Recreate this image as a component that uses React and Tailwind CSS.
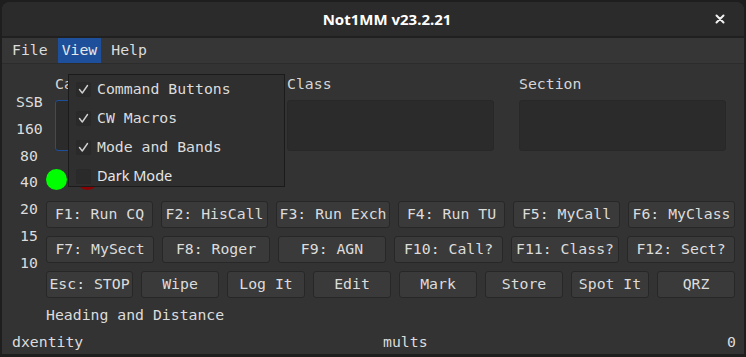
import React from 'react';

const mono = "font-['DejaVu_Sans_Mono',monospace] text-[14.8px]";

const row1 = [
  ['F1: Run CQ', 'w-[107px]'],
  ['F2: HisCall', 'w-[107px]'],
  ['F3: Run Exch', 'w-[114px]'],
  ['F4: Run TU', 'w-[107px]'],
  ['F5: MyCall', 'w-[107px]'],
  ['F6: MyClass', 'w-[107px]'],
];

const row2 = [
  ['F7: MySect', 'w-[108px]'],
  ['F8: Roger', 'w-[108px]'],
  ['F9: AGN', 'w-[108px]'],
  ['F10: Call?', 'w-[109px]'],
  ['F11: Class?', 'w-[108px]'],
  ['F12: Sect?', 'w-[108px]'],
];

const row3 = [
  ['Esc: STOP', 'w-[87px]'],
  ['Wipe', 'w-[78px]'],
  ['Log It', 'w-[78px]'],
  ['Edit', 'w-[78px]'],
  ['Mark', 'w-[78px]'],
  ['Store', 'w-[78px]'],
  ['Spot It', 'w-[78px]'],
  ['QRZ', 'w-[78px]'],
];

const bands = ['SSB', '160', '80', '40', '20', '15', '10'];

const ButtonRow = ({ items }) => (
  <div className="flex gap-2">
    {items.map(([label, w]) => (
      <div
        key={label}
        className={`${w} h-[27px] flex items-center justify-center rounded-[3px] border border-[#272727] bg-[#3a3a3a] text-[#dcdcdc] whitespace-nowrap`}
      >
        {label}
      </div>
    ))}
  </div>
);

const Field = ({ label, focused }) => (
  <div className="w-[207px] flex flex-col">
    <span className="h-[18px] leading-[18px] text-[#d6d6d6]">{label}</span>
    <div
      className={`mt-[7px] h-[51px] rounded-[3px] border bg-[#2b2b2b] ${
        focused ? 'border-[#1d4f9a]' : 'border-[#282828]'
      }`}
    />
  </div>
);

const Check = () => (
  <svg width="11" height="11" viewBox="0 0 11 11" fill="none">
    <path d="M1.5 5.5 L4.3 9 L9.5 1.5" stroke="#d0d0d0" strokeWidth="1.4" strokeLinecap="round" strokeLinejoin="round" />
  </svg>
);

const menuItems = [
  { label: 'Command Buttons', checked: true },
  { label: 'CW Macros', checked: true },
  { label: 'Mode and Bands', checked: true },
  { label: 'Dark Mode', checked: false, sans: true },
];

export default function App() {
  return (
    <div className={`relative w-[746px] h-[357px] bg-[#1e1e1e] p-[2px] pb-[3px] ${mono}`}>
      <div className="h-full flex flex-col rounded-t-[8px] overflow-hidden bg-[#333333]">
        {/* title bar */}
        <div className="h-[36px] shrink-0 flex items-center bg-[#2b2b2b] border-b-2 border-[#202020]">
          <div className="flex-1 text-center pl-[68px] pt-[1px] font-['Noto_Sans',sans-serif] font-bold text-[15px] text-white">
            Not1MM v23.2.21
          </div>
          <div className="w-[40px] flex items-center justify-center pr-[8px]">
            <svg width="10" height="10" viewBox="0 0 10 10">
              <path d="M1.5 1.5 L8.5 8.5 M8.5 1.5 L1.5 8.5" stroke="#f2f2f2" strokeWidth="2" strokeLinecap="round" />
            </svg>
          </div>
        </div>

        {/* menu bar */}
        <div className="h-[26px] shrink-0 flex items-stretch gap-[6px] pl-[6px] bg-[#363636] border-b border-[#2c2c2c] text-[#dcdcdc]">
          <span className="px-1 flex items-center">File</span>
          <span className="px-1 flex items-center bg-[#1d4f9a] text-[#e8e8e8]">View</span>
          <span className="px-1 flex items-center">Help</span>
        </div>

        {/* content */}
        <div className="flex-1 flex flex-col">
          <div className="flex">
            <div className="pl-[10px] pt-[25px] w-[44px] flex flex-col items-center text-[#dcdcdc] leading-[26.8px]">
              {bands.map((b) => (
                <span key={b} className="w-[26px] text-center">{b}</span>
              ))}
            </div>
            <div className="flex flex-col pt-[11px]">
              <div className="flex gap-[25px] pl-[9px]">
                <Field label="Callsign" focused />
                <Field label="Class" />
                <Field label="Section" />
              </div>
              <div className="mt-[18px] flex gap-[10px]">
                <div className="w-[21px] h-[21px] rounded-full bg-[#00ff00]" />
                <div className="w-[21px] h-[21px] rounded-full bg-[#8b0000]" />
              </div>
              <div className="mt-[11px] flex flex-col gap-2">
                <ButtonRow items={row1} />
                <ButtonRow items={row2} />
                <ButtonRow items={row3} />
              </div>
              <div className="mt-[8px] h-[18px] leading-[18px] text-[#dcdcdc]">Heading and Distance</div>
            </div>
          </div>
          <div className="mt-[9px] h-[18px] leading-[18px] flex pl-[10px] pr-[8px] text-[#dcdcdc]">
            <span className="w-[371px]">dxentity</span>
            <span className="flex-1">mults</span>
            <span>0</span>
          </div>
        </div>
      </div>

      {/* View dropdown */}
      <div className="absolute left-[68px] top-[74px] w-[217px] h-[113px] bg-[#2f2f2f] border border-[#1b1b1b]">
        {menuItems.map((it) => (
          <div key={it.label} className="h-[29px] flex items-center pl-[7px] gap-[6px]">
            <div className="w-[15px] h-[15px] rounded-[2px] bg-[#2a2a2a] border border-[#292929] flex items-center justify-center">
              {it.checked && <Check />}
            </div>
            <span
              className={
                it.sans
                  ? "font-['Noto_Sans',sans-serif] text-[14.5px] leading-[18px] -mt-[3px] text-[#e6e6e6]"
                  : 'text-[#dcdcdc]'
              }
            >
              {it.label}
            </span>
          </div>
        ))}
      </div>
    </div>
  );
}
